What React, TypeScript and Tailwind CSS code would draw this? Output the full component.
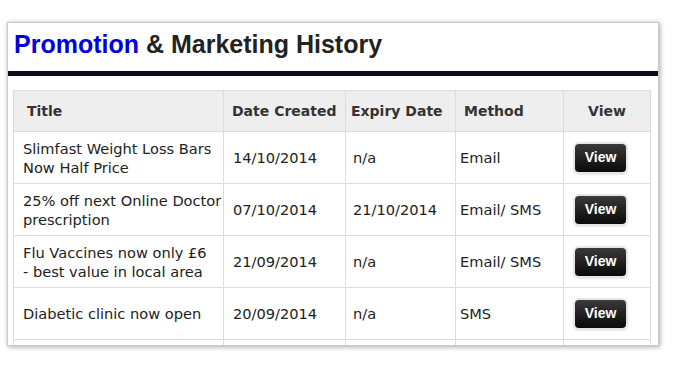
import React from 'react'

const rows = [
  { id: 1, title: ['Slimfast Weight Loss Bars', 'Now Half Price'], created: '14/10/2014', expiry: 'n/a', method: 'Email' },
  { id: 2, title: ['25% off next Online Doctor', 'prescription'], created: '07/10/2014', expiry: '21/10/2014', method: 'Email/ SMS' },
  { id: 3, title: ['Flu Vaccines now only £6', '- best value in local area'], created: '21/09/2014', expiry: 'n/a', method: 'Email/ SMS' },
  { id: 4, title: ['Diabetic clinic now open'], created: '20/09/2014', expiry: 'n/a', method: 'SMS' },
]

function ViewButton() {
  return (
    <button className="h-[28px] w-[51px] rounded-[4px] bg-gradient-to-b from-[#3a3a3a] to-[#0b0b0b] text-white text-[14px] font-bold shadow-[0_0_0_2px_#e6e6e6,0_1px_3px_rgba(0,0,0,0.5)] [font-family:'Liberation_Sans',Arial,sans-serif]">
      View
    </button>
  )
}

export default function App() {
  return (
    <div className="w-[700px] h-[370px] bg-white pt-[22px] pl-[7px]">
      {/* card */}
      <div className="w-[652px] h-[324px] overflow-hidden border border-[#c8c8c8] bg-white shadow-[1px_1px_5px_rgba(0,0,0,0.35)]">
        <h1 className="h-[48px] pl-[6px] pt-[3px] text-[25px] font-bold text-[#222] [font-family:'Liberation_Sans',Arial,sans-serif]">
          <span className="text-[#0000dd]">Promotion</span> &amp; Marketing History
        </h1>
        <div className="h-[5px] bg-[#0f0a1e]" />

        <div className="pl-[5px] pt-[14px]">
          <table className="w-[637px] table-fixed border-collapse text-[#222] [font-family:'DejaVu_Sans',Verdana,sans-serif]">
            <colgroup>
              <col className="w-[210px]" />
              <col className="w-[122px]" />
              <col className="w-[110px]" />
              <col className="w-[108px]" />
              <col className="w-[87px]" />
            </colgroup>
            <thead>
              <tr className="h-[41px] bg-[#eeeeee] text-[14px] font-bold text-[#333]">
                <th className="border border-[#dcdcdc] pl-[13px] text-left">Title</th>
                <th className="border border-[#dcdcdc] pl-[8px] text-left">Date Created</th>
                <th className="border border-[#dcdcdc] pl-[5px] text-left">Expiry Date</th>
                <th className="border border-[#dcdcdc] pl-[8px] text-left">Method</th>
                <th className="border border-[#dcdcdc] text-center">View</th>
              </tr>
            </thead>
            <tbody className="text-[14.6px] leading-[19px]">
              {rows.map((r) => (
                <tr key={r.id} className="h-[52px]">
                  <td className="border border-[#dcdcdc] pl-[9px]">
                    {r.title.map((t) => (
                      <div key={t}>{t}</div>
                    ))}
                  </td>
                  <td className="border border-[#dcdcdc] pl-[9px]">{r.created}</td>
                  <td className="border border-[#dcdcdc] pl-[7px]">{r.expiry}</td>
                  <td className="border border-[#dcdcdc] pl-[4px]">{r.method}</td>
                  <td className="border border-[#dcdcdc] pl-[11px] text-left">
                    <ViewButton />
                  </td>
                </tr>
              ))}
              <tr className="h-[20px]">
                <td className="border border-[#dcdcdc]" />
                <td className="border border-[#dcdcdc]" />
                <td className="border border-[#dcdcdc]" />
                <td className="border border-[#dcdcdc]" />
                <td className="border border-[#dcdcdc]" />
              </tr>
            </tbody>
          </table>
        </div>
      </div>
    </div>
  )
}
